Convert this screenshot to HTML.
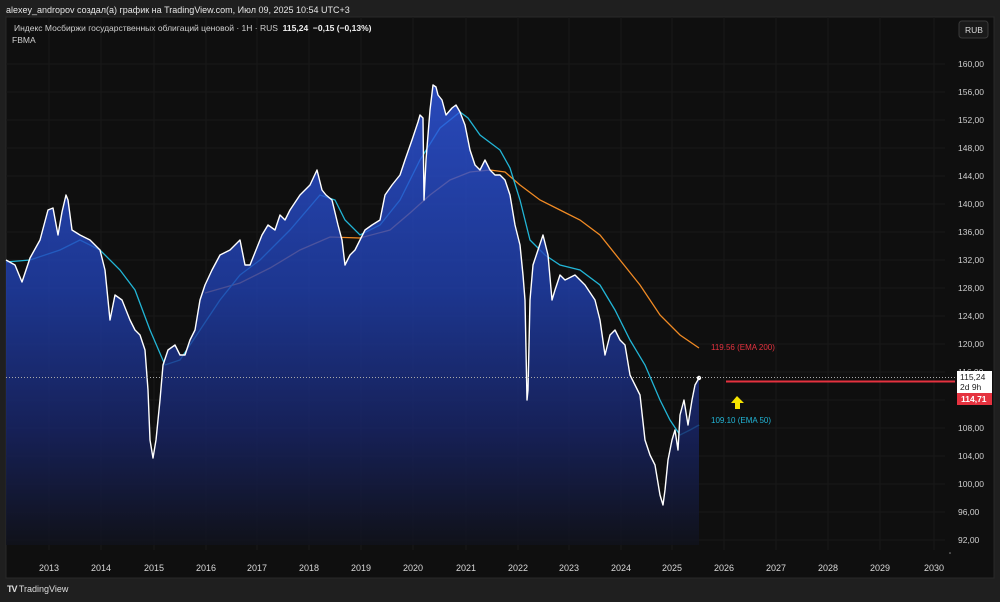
<!DOCTYPE html>
<html><head><meta charset="utf-8"><style>
html,body{margin:0;padding:0;background:#1f1f1f;width:1000px;height:602px;overflow:hidden;font-family:"Liberation Sans","Noto Sans CJK SC",sans-serif;}
.t{position:absolute;color:#d8d8d8;font-size:9px;white-space:nowrap}
</style></head><body>
<div class="t" style="left:6px;top:5px;color:#e6e6e6">alexey_andropov создал(а) график на TradingView.com, Июл 09, 2025 10:54 UTC+3</div>
<svg width="1000" height="602" style="position:absolute;left:0;top:0">
<defs>
<linearGradient id="g" x1="0" y1="80" x2="0" y2="545" gradientUnits="userSpaceOnUse">
<stop offset="0" stop-color="#2f58e6"/><stop offset="0.45" stop-color="#2040b0"/><stop offset="0.75" stop-color="#18256a"/><stop offset="1" stop-color="#10121c"/>
</linearGradient>
</defs>
<rect x="6" y="17" width="988" height="561" fill="#0f0f0f" stroke="#2a2a2a"/>
<g stroke="#181818" stroke-width="1">
<path d="M49 17V550M101 17V550M154 17V550M206 17V550M257 17V550M309 17V550M361 17V550M413 17V550M466 17V550M518 17V550M569 17V550M621 17V550M672 17V550M724 17V550M776 17V550M828 17V550M880 17V550M934 17V550"/>
<path d="M6 64H945M6 92H945M6 120H945M6 148H945M6 176H945M6 204H945M6 232H945M6 260H945M6 288H945M6 316H945M6 344H945M6 372H945M6 400H945M6 428H945M6 456H945M6 484H945M6 512H945M6 540H945"/>
</g>
<polyline fill="none" stroke="#f08a24" stroke-width="1.3" points="205,293 240,283 270,268 300,250 330,237 360,238 390,230 410,213 430,195 450,180 470,172 490,170 505,172 520,185 540,200 560,210 580,220 600,235 620,260 640,285 660,315 680,335 699,348"/>
<polyline fill="none" stroke="#22b5d6" stroke-width="1.3" points="6,262 30,260 60,250 80,240 100,250 120,270 135,290 150,330 165,365 180,360 200,330 220,300 240,275 260,260 290,230 320,195 335,200 345,220 360,235 380,225 400,200 420,160 440,128 460,112 468,118 480,135 500,150 510,168 520,200 530,240 545,255 560,265 580,270 600,285 615,310 630,340 645,365 660,400 670,420 680,435 690,430 699,425"/>
<polygon fill="url(#g)" fill-opacity="0.8" points="6,545 6,260 15,265 22,282 30,258 40,240 48,210 53,208 58,235 62,212 66,195 68,200 72,230 80,235 90,240 100,250 105,270 110,320 115,295 122,300 130,320 135,330 140,335 145,350 148,390 150,440 153,458 156,440 160,400 163,365 168,350 175,345 180,355 185,355 190,340 195,330 200,300 205,285 212,270 220,255 230,250 240,240 245,265 250,265 258,245 262,235 268,225 275,230 280,215 285,220 290,210 300,195 310,185 317,170 322,190 326,195 332,200 338,225 342,240 345,265 350,255 355,250 360,240 365,230 372,225 380,220 385,195 392,185 400,175 405,160 412,140 418,122 420,115 423,118 424,200 426,160 430,110 433,85 436,87 438,95 442,100 446,115 452,108 456,105 460,112 465,125 470,150 475,165 480,170 485,160 490,170 495,175 500,175 505,180 510,195 515,225 520,245 523,275 525,300 527,400 528,390 530,300 533,265 538,250 543,235 548,255 552,300 555,290 560,275 565,280 575,275 585,285 595,300 600,320 605,355 610,335 615,330 620,340 625,345 630,375 635,385 640,395 645,440 650,455 655,465 660,495 663,505 665,490 668,460 672,440 675,430 678,450 680,415 684,400 688,425 692,400 695,385 699,378 699,545"/>
<polyline fill="none" stroke="#ffffff" stroke-width="1.4" stroke-linejoin="round" points="6,260 15,265 22,282 30,258 40,240 48,210 53,208 58,235 62,212 66,195 68,200 72,230 80,235 90,240 100,250 105,270 110,320 115,295 122,300 130,320 135,330 140,335 145,350 148,390 150,440 153,458 156,440 160,400 163,365 168,350 175,345 180,355 185,355 190,340 195,330 200,300 205,285 212,270 220,255 230,250 240,240 245,265 250,265 258,245 262,235 268,225 275,230 280,215 285,220 290,210 300,195 310,185 317,170 322,190 326,195 332,200 338,225 342,240 345,265 350,255 355,250 360,240 365,230 372,225 380,220 385,195 392,185 400,175 405,160 412,140 418,122 420,115 423,118 424,200 426,160 430,110 433,85 436,87 438,95 442,100 446,115 452,108 456,105 460,112 465,125 470,150 475,165 480,170 485,160 490,170 495,175 500,175 505,180 510,195 515,225 520,245 523,275 525,300 527,400 528,390 530,300 533,265 538,250 543,235 548,255 552,300 555,290 560,275 565,280 575,275 585,285 595,300 600,320 605,355 610,335 615,330 620,340 625,345 630,375 635,385 640,395 645,440 650,455 655,465 660,495 663,505 665,490 668,460 672,440 675,430 678,450 680,415 684,400 688,425 692,400 695,385 699,378"/>
<circle cx="699" cy="378" r="2.2" fill="#fff"/>
<line x1="6" y1="377.5" x2="955" y2="377.5" stroke="#aaa" stroke-dasharray="1,2"/>
<line x1="726" y1="381.5" x2="955" y2="381.5" stroke="#e5323f" stroke-width="2"/>
<polygon points="737,396 731,403 735,403 735,409 740,409 740,403 744,403" fill="#f5e400"/>
<circle cx="950" cy="553" r="0.8" fill="#888"/>
<rect x="959" y="21" width="29" height="17" rx="3" fill="#1a1a1a" stroke="#3a3a3a"/>
</svg>
<div class="t" style="left:14px;top:23px;font-size:8.5px;color:#cfcfcf">Индекс Мосбиржи государственных облигаций ценовой · 1H · RUS <b style="color:#f0f0f0">&nbsp;115,24 &nbsp;−0,15 (−0,13%)</b></div>
<div class="t" style="left:12px;top:35px;font-size:8.5px;color:#cfcfcf">FBMA</div>
<div class="t" style="left:965px;top:25px;font-size:8.5px;color:#ddd">RUB</div>
<div style="position:absolute;left:958px;top:50px;font-size:8.5px;color:#cfcfcf;line-height:28px" class="t">160,00<br>156,00<br>152,00<br>148,00<br>144,00<br>140,00<br>136,00<br>132,00<br>128,00<br>124,00<br>120,00<br>116,00<br>112,00<br>108,00<br>104,00<br>100,00<br>96,00<br>92,00</div>
<div style="position:absolute;left:957px;top:371px;width:35px;height:22px;background:#fff"></div>
<div style="position:absolute;left:957px;top:393px;width:35px;height:12px;background:#e5323f"></div>
<div class="t" style="left:960px;top:372px;font-size:8.5px;color:#222;line-height:10px">115,24<br>2d 9h</div>
<div class="t" style="left:961px;top:394px;font-size:8.5px;color:#fff;font-weight:bold">114,71</div>
<div class="t" style="left:711px;top:343px;font-size:8px;color:#e5323f">119.56 (EMA 200)</div>
<div class="t" style="left:711px;top:416px;font-size:8px;color:#22b5d6">109.10 (EMA 50)</div>
<div style="position:absolute;top:563px;left:0;font-size:8.5px;color:#cfcfcf">
<span class="t" style="left:39px">2013</span><span class="t" style="left:91px">2014</span><span class="t" style="left:144px">2015</span><span class="t" style="left:196px">2016</span><span class="t" style="left:247px">2017</span><span class="t" style="left:299px">2018</span><span class="t" style="left:351px">2019</span><span class="t" style="left:403px">2020</span><span class="t" style="left:456px">2021</span><span class="t" style="left:508px">2022</span><span class="t" style="left:559px">2023</span><span class="t" style="left:611px">2024</span><span class="t" style="left:662px">2025</span><span class="t" style="left:714px">2026</span><span class="t" style="left:766px">2027</span><span class="t" style="left:818px">2028</span><span class="t" style="left:870px">2029</span><span class="t" style="left:924px">2030</span>
</div>
<div class="t" style="left:7px;top:584px;font-size:9px;color:#ddd"><b style="letter-spacing:-1px">TV</b> TradingView</div>
</body></html>
